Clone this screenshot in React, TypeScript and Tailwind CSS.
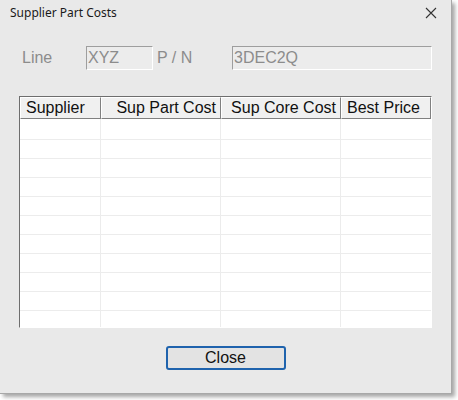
import React from 'react';

const columns = [
  { label: 'Supplier', width: 'w-[81px]', align: 'justify-start pl-[5px]' },
  { label: 'Sup Part Cost', width: 'w-[120px]', align: 'justify-end pr-[4px]' },
  { label: 'Sup Core Cost', width: 'w-[120px]', align: 'justify-end pr-[4px]' },
  { label: 'Best Price', width: 'flex-1', align: 'justify-start pl-[5px]' },
];

const rowHeights = [21, 19, 19, 19, 19, 19, 19, 19, 19, 19, 19, 17];

const App: React.FC = () => {
  return (
    <div className="w-[458px] h-[400px] bg-white relative font-['Liberation_Sans',Arial,sans-serif]">
      {/* Dialog window */}
      <div className="w-[452px] h-[394px] bg-[#e9e9e9] border-r border-b border-[#a8a8a8] shadow-[3px_3px_4px_rgba(0,0,0,0.35)] flex flex-col">
        {/* Title bar */}
        <div className="h-[26px] flex items-center justify-between pl-[10px] pr-[14px]">
          <span className="text-[12px] text-[#1a1a1a] font-['Noto_Sans',sans-serif] leading-none">Supplier Part Costs</span>
          <svg width="12" height="12" viewBox="0 0 12 12">
            <path d="M1 1 L11 11 M11 1 L1 11" stroke="#333" strokeWidth="1.1" fill="none" />
          </svg>
        </div>

        {/* Line / PN fields */}
        <div className="flex items-center mt-[20px] h-[24px]">
          <span className="ml-[22px] w-[64px] text-[16px] text-[#8c8c8c]">Line</span>
          <div className="w-[67px] h-[24px] bg-[#ececec] border-t border-l border-[#9e9e9e] border-r-white border-b-white border-r border-b flex items-center pl-[1px] text-[16px] text-[#8c8c8c]">
            XYZ
          </div>
          <span className="ml-[4px] w-[75px] text-[16px] text-[#8c8c8c]">P / N</span>
          <div className="w-[200px] h-[24px] bg-[#ececec] border-t border-l border-[#9e9e9e] border-r-white border-b-white border-r border-b flex items-center pl-[1px] text-[16px] text-[#8c8c8c]">
            3DEC2Q
          </div>
        </div>

        {/* Grid */}
        <div className="ml-[19px] mt-[26px] w-[413px] h-[232px] border-t border-l border-[#6e6e6e] border-r border-b border-r-white border-b-white bg-white flex flex-col overflow-hidden">
          <div className="flex h-[22px] shrink-0">
            {columns.map((c) => (
              <div
                key={c.label}
                className={`${c.width} ${c.align} h-full flex items-center bg-[#f0f0f0] border-t border-l border-white border-r border-b border-r-[#808080] border-b-[#808080] text-[16px] text-[#111] leading-none`}
              >
                {c.label}
              </div>
            ))}
          </div>
          {rowHeights.map((h, i) => (
            <div key={i} className="flex shrink-0 border-b border-[#ececec]" style={{ height: h }}>
              <div className="w-[81px] border-r border-[#ececec]" />
              <div className="w-[120px] border-r border-[#ececec]" />
              <div className="w-[120px] border-r border-[#ececec]" />
              <div className="flex-1" />
            </div>
          ))}
        </div>

        {/* Close button */}
        <div className="flex justify-center mt-[18px]">
          <button className="w-[120px] h-[24px] bg-[#e3e3e3] border-2 border-[#1f63ad] rounded-[3px] text-[16px] text-[#111] flex items-center justify-center leading-none">
            Close
          </button>
        </div>
      </div>
    </div>
  );
};

export default App;
